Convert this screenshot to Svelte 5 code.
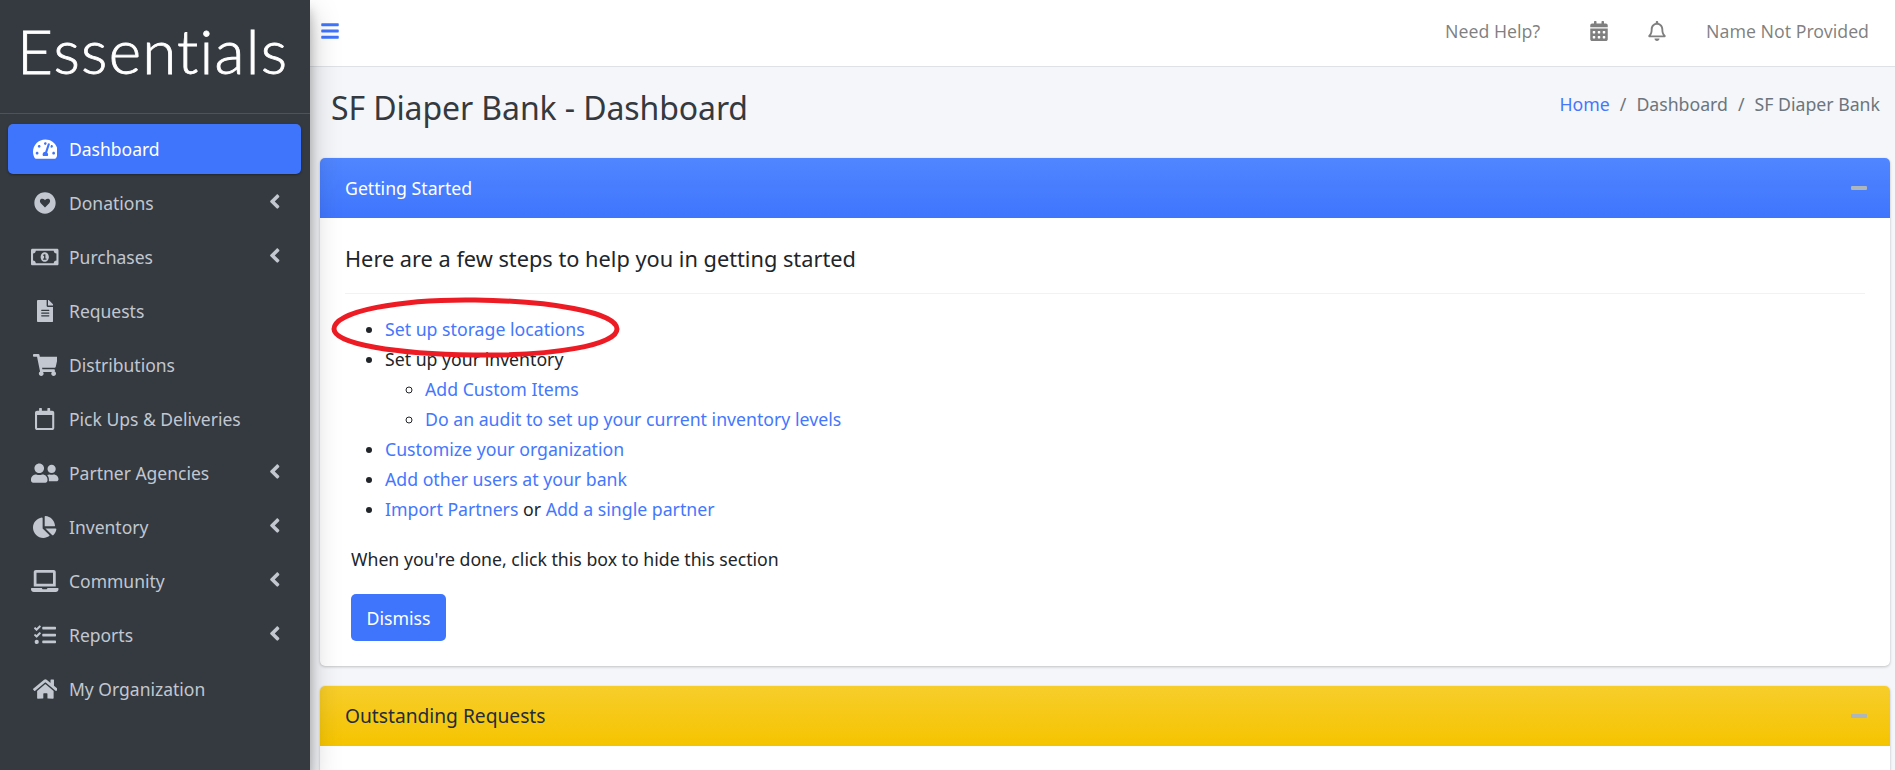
<script>
  const icons = {
    gauge: { box: '0 0 576 512', d: 'M288 32C128.94 32 0 160.94 0 320c0 52.8 14.25 102.26 39.06 144.8 5.61 9.62 16.3 15.2 27.44 15.2h443c11.14 0 21.83-5.58 27.44-15.2C561.75 422.26 576 372.8 576 320c0-159.06-128.94-288-288-288zm0 64c14.71 0 26.58 10.13 30.32 23.65-1.11 2.26-2.64 4.23-3.45 6.67l-9.22 27.67c-5.13 3.49-10.97 6.01-17.64 6.01-17.67 0-32-14.33-32-32S270.33 96 288 96zM96 384c-17.67 0-32-14.33-32-32s14.33-32 32-32 32 14.33 32 32-14.33 32-32 32zm48-160c-17.67 0-32-14.33-32-32s14.33-32 32-32 32 14.33 32 32-14.33 32-32 32zm246.77-72.41l-61.33 184C343.13 347.33 352 364.54 352 384c0 11.72-3.38 22.55-8.88 32H232.88c-5.5-9.45-8.88-20.28-8.88-32 0-33.94 26.5-61.43 59.9-63.59l61.34-184.01c4.17-12.56 17.73-19.45 30.36-15.17 12.57 4.19 19.35 17.79 15.17 30.36zm14.66 57.2l15.52-46.55c3.47-1.29 7.13-2.23 11.05-2.23 17.67 0 32 14.33 32 32s-14.33 32-32 32c-11.38-.01-20.89-6.28-26.57-15.22zM480 384c-17.67 0-32-14.33-32-32s14.33-32 32-32 32 14.33 32 32-14.33 32-32 32z' },
    heart: { box: '0 0 512 512', d: 'M256 8C119 8 8 119 8 256s111 248 248 248 248-111 248-248S393 8 256 8zm0 352-98-100c-30-31-26-76 4-96 26-17 60-10 80 12l14 15 14-15c20-22 54-29 80-12 30 20 34 65 4 96z' },
    money: { box: '0 0 640 512', d: 'M320 144c-53.02 0-96 50.14-96 112 0 61.85 42.98 112 96 112 53 0 96-50.13 96-112 0-61.86-42.98-112-96-112zm40 168c0 4.42-3.58 8-8 8h-64c-4.42 0-8-3.58-8-8v-16c0-4.42 3.58-8 8-8h16v-55.44l-.47.31a7.992 7.992 0 0 1-11.09-2.22l-8.88-13.31a7.992 7.992 0 0 1 2.22-11.09l15.33-10.22a23.99 23.99 0 0 1 13.31-4.03H328c4.42 0 8 3.58 8 8v88h16c4.42 0 8 3.58 8 8v16zM608 64H32C14.33 64 0 78.33 0 96v320c0 17.67 14.33 32 32 32h576c17.67 0 32-14.33 32-32V96c0-17.67-14.33-32-32-32zm-16 272c-35.35 0-64 28.65-64 64H112c0-35.35-28.65-64-64-64V176c35.35 0 64-28.65 64-64h416c0 35.35 28.65 64 64 64v160z' },
    file: { box: '0 0 384 512', d: 'M224 136V0H24C10.7 0 0 10.7 0 24v464c0 13.3 10.7 24 24 24h336c13.3 0 24-10.7 24-24V160H248c-13.2 0-24-10.8-24-24zm64 236c0 6.6-5.4 12-12 12H108c-6.6 0-12-5.4-12-12v-8c0-6.6 5.4-12 12-12h168c6.6 0 12 5.4 12 12v8zm0-64c0 6.6-5.4 12-12 12H108c-6.6 0-12-5.4-12-12v-8c0-6.6 5.4-12 12-12h168c6.6 0 12 5.4 12 12v8zm0-72v8c0 6.6-5.4 12-12 12H108c-6.6 0-12-5.4-12-12v-8c0-6.6 5.4-12 12-12h168c6.6 0 12 5.4 12 12zm96-114.1v6.1H256V0h6.1c6.4 0 12.5 2.5 17 7l97.9 98c4.5 4.5 7 10.6 7 16.9z' },
    cart: { box: '0 0 576 512', d: 'M528.12 301.319l47.273-208C578.806 78.301 567.391 64 551.99 64H159.208l-9.166-44.81C147.758 8.021 137.93 0 126.529 0H24C10.745 0 0 10.745 0 24v16c0 13.255 10.745 24 24 24h69.883l70.248 343.435C147.325 417.1 136 435.222 136 456c0 30.928 25.072 56 56 56s56-25.072 56-56c0-15.674-6.447-29.835-16.824-40h209.647C430.447 426.165 424 440.326 424 456c0 30.928 25.072 56 56 56s56-25.072 56-56c0-22.172-12.888-41.332-31.579-50.405l5.517-24.276c3.413-15.018-8.002-29.319-23.403-29.319H218.117l-6.545-32h293.145c11.206 0 20.92-7.754 23.403-18.681z' },
    calendar: { box: '0 0 448 512', d: 'M400 64h-48V12c0-6.6-5.4-12-12-12h-40c-6.6 0-12 5.4-12 12v52H160V12c0-6.6-5.4-12-12-12h-40c-6.6 0-12 5.4-12 12v52H48C21.5 64 0 85.5 0 112v352c0 26.5 21.5 48 48 48h352c26.5 0 48-21.5 48-48V112c0-26.5-21.5-48-48-48zm-6 400H54c-3.3 0-6-2.7-6-6V160h352v298c0 3.3-2.7 6-6 6z' },
    friends: { box: '0 0 640 512', d: 'M192 256c61.9 0 112-50.1 112-112S253.9 32 192 32 80 82.1 80 144s50.1 112 112 112zm76.8 32h-8.3c-20.8 10-43.9 16-68.5 16s-47.6-6-68.5-16h-8.3C51.6 288 0 339.6 0 403.2V432c0 26.5 21.5 48 48 48h288c26.5 0 48-21.5 48-48v-28.8c0-63.6-51.6-115.2-115.2-115.2zM480 256c53 0 96-43 96-96s-43-96-96-96-96 43-96 96 43 96 96 96zm48 32h-3.8c-13.9 4.8-28.6 8-44.2 8s-30.3-3.2-44.2-8H432c-20.4 0-39.2 5.9-55.7 15.4 24.4 26.3 39.7 61.2 39.7 99.8v38.4c0 2.2-.5 4.3-.6 6.4H592c26.5 0 48-21.5 48-48 0-61.9-50.1-112-112-112z' },
    pie: { box: '0 0 544 512', d: 'M527.79 288H290.5l158.03 158.03c6.04 6.04 15.98 6.53 22.19.68 38.7-36.46 65.32-85.61 73.13-140.86 1.34-9.46-6.51-17.85-16.06-17.85zm-15.83-64.8C503.72 103.74 408.26 8.28 288.8.04 279.68-.59 272 7.1 272 16.24V240h223.77c9.14 0 16.82-7.68 16.19-16.8zM224 288V50.71c0-9.55-8.39-17.4-17.84-16.06C86.99 51.49-4.1 155.6.14 280.37 4.5 408.51 114.83 513.59 243.03 511.98c50.4-.63 96.97-16.87 135.26-44.03 7.9-5.6 8.42-17.23 1.57-24.08L224 288z' },
    laptop: { box: '0 0 640 512', d: 'M624 416H381.54c-.74 19.81-14.71 32-32.74 32H288c-18.69 0-33.02-17.47-32.77-32H16c-8.8 0-16 7.2-16 16v16c0 35.2 28.8 64 64 64h512c35.2 0 64-28.8 64-64v-16c0-8.8-7.2-16-16-16zM576 48c0-26.4-21.6-48-48-48H112C85.6 0 64 21.6 64 48v336h512V48zm-64 272H128V64h384v256z' },
    tasks: { box: '0 0 512 512', d: 'M139.61 35.5a12 12 0 0 0-17 0L58.93 98.81l-22.7-22.12a12 12 0 0 0-17 0L3.53 92.41a12 12 0 0 0 0 17l47.59 47.4a12.78 12.78 0 0 0 17.61 0l15.59-15.62L156.52 69a12.09 12.09 0 0 0 .09-17zm0 159.19a12 12 0 0 0-17 0l-63.68 63.72-22.7-22.1a12 12 0 0 0-17 0L3.53 252a12 12 0 0 0 0 17L51 316.5a12.77 12.77 0 0 0 17.6 0l15.7-15.69 72.2-72.22a12 12 0 0 0 .09-16.9zM64 368c-26.49 0-48.59 21.5-48.59 48S37.53 464 64 464a48 48 0 0 0 0-96zm432 16H208a16 16 0 0 0-16 16v32a16 16 0 0 0 16 16h288a16 16 0 0 0 16-16v-32a16 16 0 0 0-16-16zm0-320H208a16 16 0 0 0-16 16v32a16 16 0 0 0 16 16h288a16 16 0 0 0 16-16V80a16 16 0 0 0-16-16zm0 160H208a16 16 0 0 0-16 16v32a16 16 0 0 0 16 16h288a16 16 0 0 0 16-16v-32a16 16 0 0 0-16-16z' },
    home: { box: '0 0 576 512', d: 'M280.37 148.26L96 300.11V464a16 16 0 0 0 16 16l112.06-.29a16 16 0 0 0 15.92-16V368a16 16 0 0 1 16-16h64a16 16 0 0 1 16 16v95.64a16 16 0 0 0 16 16.05L464 480a16 16 0 0 0 16-16V300L295.67 148.26a12.19 12.19 0 0 0-15.3 0zM571.6 251.47L488 182.56V44.05a12 12 0 0 0-12-12h-56a12 12 0 0 0-12 12v72.61L318.47 43a48 48 0 0 0-61 0L4.34 251.47a12 12 0 0 0-1.6 16.9l25.5 31A12 12 0 0 0 45.15 301l235.22-193.74a12.19 12.19 0 0 1 15.3 0L530.9 301a12 12 0 0 0 16.9-1.6l25.5-31a12 12 0 0 0-1.7-16.93z' },
    angle: { box: '0 0 256 512', d: 'M31.7 239l136-136c9.4-9.4 24.6-9.4 33.9 0l22.6 22.6c9.4 9.4 9.4 24.6 0 33.9L127.9 256l96.4 96.4c9.4 9.4 9.4 24.6 0 33.9L201.7 409c-9.4 9.4-24.6 9.4-33.9 0l-136-136c-9.5-9.4-9.5-24.6-.1-34z' },
    bars: { box: '0 0 448 512', d: 'M16 132h416c8.837 0 16-7.163 16-16V76c0-8.837-7.163-16-16-16H16C7.163 60 0 67.163 0 76v40c0 8.837 7.163 16 16 16zm0 160h416c8.837 0 16-7.163 16-16v-40c0-8.837-7.163-16-16-16H16c-8.837 0-16 7.163-16 16v40c0 8.837 7.163 16 16 16zm0 160h416c8.837 0 16-7.163 16-16v-40c0-8.837-7.163-16-16-16H16c-8.837 0-16 7.163-16 16v40c0 8.837 7.163 16 16 16z' },
    calendarAlt: { box: '0 0 448 512', d: 'M0 464c0 26.5 21.5 48 48 48h352c26.5 0 48-21.5 48-48V192H0v272zm320-196c0-6.6 5.4-12 12-12h40c6.6 0 12 5.4 12 12v40c0 6.6-5.4 12-12 12h-40c-6.6 0-12-5.4-12-12v-40zm0 128c0-6.6 5.4-12 12-12h40c6.6 0 12 5.4 12 12v40c0 6.6-5.4 12-12 12h-40c-6.6 0-12-5.4-12-12v-40zM192 268c0-6.6 5.4-12 12-12h40c6.6 0 12 5.4 12 12v40c0 6.6-5.4 12-12 12h-40c-6.6 0-12-5.4-12-12v-40zm0 128c0-6.6 5.4-12 12-12h40c6.6 0 12 5.4 12 12v40c0 6.6-5.4 12-12 12h-40c-6.6 0-12-5.4-12-12v-40zM64 268c0-6.6 5.4-12 12-12h40c6.6 0 12 5.4 12 12v40c0 6.6-5.4 12-12 12H76c-6.6 0-12-5.4-12-12v-40zm0 128c0-6.6 5.4-12 12-12h40c6.6 0 12 5.4 12 12v40c0 6.6-5.4 12-12 12H76c-6.6 0-12-5.4-12-12v-40zM400 64h-48V16c0-8.8-7.2-16-16-16h-32c-8.8 0-16 7.2-16 16v48H160V16c0-8.8-7.2-16-16-16h-32c-8.8 0-16 7.2-16 16v48H48C21.5 64 0 85.5 0 112v48h448v-48c0-26.5-21.5-48-48-48z' },
    bell: { box: '0 0 448 512', d: 'M439.39 362.29c-19.32-20.76-55.47-51.99-55.47-154.29 0-77.7-54.48-139.9-127.94-155.16V32c0-17.67-14.32-32-31.98-32s-31.98 14.33-31.98 32v20.84C118.56 68.1 64.08 130.3 64.08 208c0 102.3-36.15 133.53-55.47 154.29-6 6.45-8.66 14.16-8.61 21.71.11 16.4 12.98 32 32.1 32h383.8c19.12 0 32-15.6 32.1-32 .05-7.55-2.61-15.27-8.61-21.71zM67.53 368c21.22-27.97 44.42-74.33 44.53-159.42 0-.2-.06-.38-.06-.58 0-61.86 50.14-112 112-112s112 50.14 112 112c0 .2-.06.38-.06.58.11 85.1 23.31 131.46 44.53 159.42H67.53zM224 512c35.32 0 63.97-28.65 63.97-64H160.03c0 35.35 28.65 64 63.97 64z' }
  };

  const nav = [
    { label: 'Dashboard', icon: 'gauge', active: true },
    { label: 'Donations', icon: 'heart', more: true },
    { label: 'Purchases', icon: 'money', more: true },
    { label: 'Requests', icon: 'file' },
    { label: 'Distributions', icon: 'cart' },
    { label: 'Pick Ups & Deliveries', icon: 'calendar' },
    { label: 'Partner Agencies', icon: 'friends', more: true },
    { label: 'Inventory', icon: 'pie', more: true },
    { label: 'Community', icon: 'laptop', more: true },
    { label: 'Reports', icon: 'tasks', more: true },
    { label: 'My Organization', icon: 'home' }
  ];
</script>

{#snippet icon(name, cls)}
  <svg class={cls} viewBox={icons[name].box} fill="currentColor" aria-hidden="true">
    <path d={icons[name].d} />
  </svg>
{/snippet}

<div class="layout">
  <aside class="sidebar">
    <div class="brand">Essentials</div>
    <nav class="nav">
      {#each nav as item}
        <a class="nav-link" class:active={item.active} href="#top">
          <span class="nav-icon">{@render icon(item.icon, 'ico-' + item.icon)}</span>
          <span class="nav-label">{item.label}</span>
          {#if item.more}
            {@render icon('angle', 'caret')}
          {/if}
        </a>
      {/each}
    </nav>
  </aside>

  <div class="main">
    <header class="topbar">
      <a class="burger" href="#top" aria-label="Menu">{@render icon('bars', 'burger-ico')}</a>
      <div class="top-right">
        <a href="#top">Need Help?</a>
        {@render icon('calendarAlt', 'top-ico cal')}
        {@render icon('bell', 'top-ico bell')}
        <a href="#top">Name Not Provided</a>
      </div>
    </header>

    <div class="content-header">
      <h1>SF Diaper Bank - Dashboard</h1>
      <ol class="crumbs">
        <li><a href="#top">Home</a></li>
        <li class="sep">/</li>
        <li>Dashboard</li>
        <li class="sep">/</li>
        <li>SF Diaper Bank</li>
      </ol>
    </div>

    <section class="card">
      <div class="card-head blue">
        <span>Getting Started</span>
        <span class="minus"></span>
      </div>
      <div class="card-body">
        <h4>Here are a few steps to help you in getting started</h4>
        <hr />
        <div class="steps">
          <ul>
            <li><a href="#top">Set up storage locations</a></li>
            <li>
              Set up your inventory
              <ul>
                <li><a href="#top">Add Custom Items</a></li>
                <li><a href="#top">Do an audit to set up your current inventory levels</a></li>
              </ul>
            </li>
            <li><a href="#top">Customize your organization</a></li>
            <li><a href="#top">Add other users at your bank</a></li>
            <li><a href="#top">Import Partners</a> or <a href="#top">Add a single partner</a></li>
          </ul>
          <svg class="ring" viewBox="0 0 290 62" aria-hidden="true">
            <path d="M144 3C70 2 3 14 3 32c0 15 62 25 140 26 80 1 143-10 143-26C286 15 218 4 144 3Z" fill="none" stroke="#ed1c24" stroke-width="5" />
          </svg>
        </div>
        <p>When you're done, click this box to hide this section</p>
        <button class="dismiss">Dismiss</button>
      </div>
    </section>

    <section class="card last">
      <div class="card-head yellow">
        <span class="big">Outstanding Requests</span>
        <span class="minus"></span>
      </div>
      <div class="card-body empty"></div>
    </section>
  </div>
</div>

<style>
  :global(body) {
    margin: 0;
    background: #f4f6f9;
  }

  .layout {
    display: flex;
    height: 770px;
    overflow: hidden;
    font-family: "Noto Sans", sans-serif;
    font-size: 17.7px;
    line-height: 30px;
    color: #212529;
    background: #f4f6f9;
  }

  a {
    color: #4477fd;
    text-decoration: none;
  }

  .sidebar {
    flex: 0 0 310px;
    background: #343a40;
    box-shadow: 0 14px 28px rgba(0, 0, 0, 0.25), 0 10px 10px rgba(0, 0, 0, 0.22);
    z-index: 2;
  }

  .brand {
    height: 98px;
    padding: 15px 0 0 17px;
    border-bottom: 1px solid #4b545c;
    color: #fff;
    font-family: "Lato", sans-serif;
    font-weight: 300;
    font-size: 62px;
    line-height: 70px;
    letter-spacing: 1.2px;
    -webkit-text-stroke: 0.8px #fff;
  }

  .nav {
    padding: 10px 9px 0 8px;
    display: flex;
    flex-direction: column;
    gap: 4px;
  }

  .nav-link {
    display: flex;
    align-items: center;
    height: 50px;
    border-radius: 5px;
    padding: 0 21px 0 23px;
    color: #c2c7d0;
  }

  .nav-link.active {
    background: #3f75fd;
    color: #fff;
    box-shadow: 0 1px 3px rgba(0, 0, 0, 0.12), 0 1px 2px rgba(0, 0, 0, 0.24);
  }

  .nav-icon {
    flex: 0 0 28px;
    display: flex;
    justify-content: center;
    margin-right: 10px;
  }

  .nav-icon svg {
    height: 22px;
    max-width: 28px;
  }

  .nav-label {
    flex: 1;
    font-size: 17.5px;
  }

  .caret {
    height: 23px;
    width: 11.5px;
    margin-top: -4px;
  }

  .main {
    flex: 1;
    min-width: 0;
  }

  .topbar {
    height: 62px;
    padding: 0 26px 4px 11px;
    display: flex;
    align-items: center;
    justify-content: space-between;
    background: #fff;
    border-bottom: 1px solid #dee2e6;
  }

  .burger {
    display: flex;
  }

  .burger-ico {
    height: 20px;
    width: 18px;
    color: #3f75fd;
  }

  .top-right {
    display: flex;
    align-items: center;
  }

  .top-right a {
    color: rgba(0, 0, 0, 0.5);
  }

  .top-ico {
    height: 20px;
    width: 18px;
    color: rgba(0, 0, 0, 0.5);
  }

  .cal {
    margin-left: 50px;
  }

  .bell {
    margin: 0 40px;
  }

  .content-header {
    height: 81px;
    padding: 0 15px 10px 21px;
    display: flex;
    justify-content: space-between;
    align-items: center;
  }

  h1 {
    margin: 0;
    font-size: 32px;
    font-weight: 400;
    line-height: 40px;
    letter-spacing: -0.1px;
    color: #343a40;
  }

  .crumbs {
    display: flex;
    margin: -8px 0 0;
    padding: 0;
    list-style: none;
    color: #6c757d;
  }

  .sep {
    padding: 0 10px;
  }

  .card {
    margin: 0 5px 20px 10px;
    background: #fff;
    border-radius: 5px;
    box-shadow: 0 0 1px rgba(0, 0, 0, 0.125), 0 1px 3px rgba(0, 0, 0, 0.2);
  }

  .card-head {
    height: 60px;
    padding: 0 25px;
    display: flex;
    align-items: center;
    justify-content: space-between;
    border-radius: 5px 5px 0 0;
  }

  .blue {
    color: #fff;
    background: linear-gradient(180deg, #5086ff, #3f75fd);
  }

  .yellow {
    color: #1f2d3d;
    background: linear-gradient(180deg, #f7cd2b, #f5c400);
  }

  .big {
    font-size: 19.2px;
  }

  .minus {
    width: 16px;
    height: 4px;
    border-radius: 1px;
    margin-right: -2px;
    background: #adb5bd;
  }

  .card-body {
    padding: 26px 25px 25px;
    height: 448px;
    box-sizing: border-box;
  }

  .card-body.empty {
    height: 200px;
  }

  h4 {
    margin: 0;
    font-size: 21.75px;
    font-weight: 400;
    line-height: 30px;
  }

  hr {
    border: 0;
    border-top: 1px solid #f1f2f3;
    margin: 19px 0 20px;
  }

  .steps {
    position: relative;
  }

  ul {
    margin: 0;
    padding-left: 40px;
    list-style: disc;
  }

  li ul {
    list-style: circle;
  }

  .ring {
    position: absolute;
    left: -14px;
    top: -17px;
    width: 290px;
    height: 62px;
  }

  p {
    margin: 20px 0 20px 6px;
  }

  .dismiss {
    display: block;
    margin-left: 6px;
    width: 95px;
    height: 47px;
    border: 0;
    border-radius: 5px;
    background: #3f75fd;
    color: #fff;
    font: inherit;
  }
</style>
